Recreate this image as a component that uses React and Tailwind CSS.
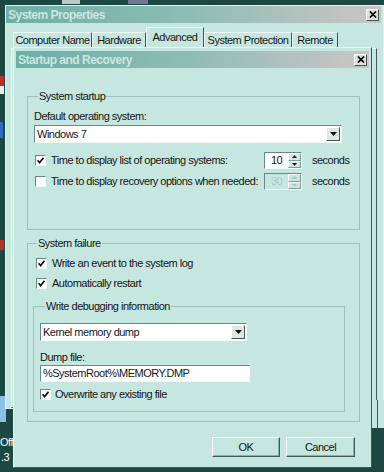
import React from 'react';
import clsx from 'clsx';

const sunken = 'border border-t-[#6b8782] border-l-[#6b8782] border-r-[#f2f9f7] border-b-[#f2f9f7]';
const raised = 'border border-t-white border-l-white border-r-[#3f5955] border-b-[#3f5955]';

function CloseBox() {
  return (
    <div className={clsx('w-[13px] h-[12px] bg-[#dcdfdc] flex items-center justify-center', raised)}>
      <svg width="8" height="7" viewBox="0 0 8 7">
        <path d="M1 0.5 L7 6.5 M7 0.5 L1 6.5" stroke="#000" strokeWidth="1.7" />
      </svg>
    </div>
  );
}

function TitleBar({ title }) {
  return (
    <div className="h-[17px] flex items-center justify-between bg-linear-to-r from-[#6cafa5] via-[#8fbdb5] to-[#cbc5c6]">
      <span className="pl-[2px] font-bold text-[12px] tracking-[-0.5px] text-[#cde6e0]">{title}</span>
      <div className="mr-[2px]">
        <CloseBox />
      </div>
    </div>
  );
}

function Check({ checked }) {
  return (
    <div className={clsx('w-[11px] h-[11px] shrink-0 bg-white flex items-center justify-center', sunken)}>
      {checked && (
        <svg width="7" height="7" viewBox="0 0 7 7">
          <path d="M0.6 3.2 L2.6 5.6 L6.5 0.8" fill="none" stroke="#111" strokeWidth="1.7" />
        </svg>
      )}
    </div>
  );
}

function DropBtn() {
  return (
    <div className={clsx('w-[14px] h-[14px] bg-[#dfe7e5] flex items-center justify-center', raised)}>
      <svg width="7" height="4" viewBox="0 0 7 4">
        <path d="M0 0 H7 L3.5 4 Z" fill="#111" />
      </svg>
    </div>
  );
}

function Spin({ value, disabled }) {
  const arrow = disabled ? '#a9c6c0' : '#222';
  const btn = clsx(
    'flex-1 flex items-center justify-center border border-t-white border-l-white border-r-[#7f9b96] border-b-[#7f9b96]',
    disabled ? 'bg-[#c6e7e0]' : 'bg-[#d5e6e2]'
  );
  return (
    <div className={clsx('w-[38px] h-[17px] flex shrink-0', sunken, disabled ? 'bg-[#c6e7e0] text-[#a9cac3]' : 'bg-white')}>
      <span className="flex-1 pl-[6px] leading-[15px]">{value}</span>
      <div className="w-[13px] flex flex-col">
        <div className={btn}>
          <svg width="5" height="3" viewBox="0 0 5 3"><path d="M0 3 H5 L2.5 0 Z" fill={arrow} /></svg>
        </div>
        <div className={btn}>
          <svg width="5" height="3" viewBox="0 0 5 3"><path d="M0 0 H5 L2.5 3 Z" fill={arrow} /></svg>
        </div>
      </div>
    </div>
  );
}

function CheckRow({ checked, label, className }) {
  return (
    <div className={clsx('flex items-center h-[13px]', className)}>
      <Check checked={checked} />
      <span className="ml-[5px] leading-[13px] whitespace-nowrap">{label}</span>
    </div>
  );
}

const tabs = [
  { label: 'Computer Name', w: 'w-[79px]' },
  { label: 'Hardware', w: 'w-[54px]' },
  { label: 'Advanced', w: 'w-[58px]', active: true },
  { label: 'System Protection', w: 'w-[88px]' },
  { label: 'Remote', w: 'w-[46px]' },
];

export default function App() {
  return (
    <div className="relative w-[384px] h-[472px] overflow-hidden bg-[#1d4842] font-['Liberation_Sans',Arial,sans-serif] text-[11px] tracking-[-0.5px] text-[#151515]">
      {/* desktop bits peeking out */}
      <div className="absolute left-[62px] top-0 w-[18px] h-[4px] bg-[#b9c9c8]" />
      <div className="absolute left-[128px] top-0 w-[20px] h-[4px] bg-[#6f7892]" />
      <div className="absolute left-0 top-[76px] w-[4px] h-[10px] bg-[#c42b2b]" />
      <div className="absolute left-0 top-[86px] w-[4px] h-[8px] bg-[#e9eef0]" />
      <div className="absolute left-0 top-[122px] w-[3px] h-[16px] bg-[#2f6cbf]" />
      <div className="absolute left-0 top-[240px] w-[4px] h-[10px] bg-[#b83030]" />
      <div className="absolute left-0 top-[396px] w-[6px] h-[26px] bg-[#8cc1e4]" />
      <span className="absolute left-0 top-[436px] text-white leading-[13px]">Office</span>
      <span className="absolute left-[1px] top-[451px] text-white leading-[13px]">.3</span>

      {/* System Properties window */}
      <div className="absolute left-[5px] top-[5px] w-[379px] h-[404px] bg-[#c6e7e0] border border-[#e4f2ef] flex flex-col">
        <div className="mr-[2px]">
          <TitleBar title="System Properties" />
        </div>
        <div className="h-[25px] flex items-end pl-[7px]">
          {tabs.map((t) => (
            <div
              key={t.label}
              className={clsx(
                t.w,
                'flex items-center justify-center border-t border-l border-r border-t-[#eef8f6] border-l-[#eef8f6] border-r-[#3f5955]',
                t.active ? 'h-[21px] pb-[2px]' : 'h-[16px]'
              )}
            >
              {t.label}
            </div>
          ))}
        </div>
        <div className="flex-1 ml-[5px] mr-[6px] border border-t-[#eef8f6] border-l-[#eef8f6] border-r-[#3f5955] border-b-[#3f5955]" />
      </div>
      {/* right edge of System Properties continues a bit lower behind the dialog */}
      <div className="absolute left-[372px] top-[400px] w-[12px] h-[28px] bg-[#c6e7e0] border-l-[5px] border-l-[#c6e7e0]">
        <div className="w-[1px] h-full bg-[#3f5955]" />
      </div>

      {/* Startup and Recovery dialog */}
      <div className="absolute left-[13px] top-[47px] w-[359px] h-[421px] z-10 bg-[#c6e7e0] border border-t-[#e8f5f2] border-l-[#e8f5f2] border-r-[#3f5955] border-b-[#3f5955] pt-[3px] px-[2px] flex flex-col">
        <TitleBar title="Startup and Recovery" />

        <fieldset className="mt-[22px] ml-[11px] mr-[9px] border border-[#9dc0b9] pl-[6px] pb-[39px]">
          <legend className="ml-[4px] px-[1px] leading-[13px]">System startup</legend>
          <div className="mt-[7px] leading-[13px]">Default operating system:</div>
          <div className={clsx('mt-[2px] w-[308px] h-[18px] bg-white flex items-center justify-between', sunken)}>
            <span className="pl-[2px]">Windows 7</span>
            <div className="mr-[1px]"><DropBtn /></div>
          </div>
          <div className="mt-[9px] h-[17px] flex items-center">
            <CheckRow checked label="Time to display list of operating systems:" className="w-[230px] pl-[1px]" />
            <Spin value="10" />
            <span className="ml-[10px]">seconds</span>
          </div>
          <div className="mt-[4px] h-[17px] flex items-center">
            <CheckRow label="Time to display recovery options when needed:" className="w-[230px] pl-[1px]" />
            <Spin value="30" disabled />
            <span className="ml-[10px]">seconds</span>
          </div>
        </fieldset>

        <fieldset className="mt-[7px] ml-[11px] mr-[9px] border border-[#9dc0b9] pl-[5px] pb-[9px]">
          <legend className="ml-[4px] px-[1px] leading-[13px]">System failure</legend>
          <CheckRow checked label="Write an event to the system log" className="mt-[7px] ml-[3px]" />
          <CheckRow checked label="Automatically restart" className="mt-[7px] ml-[3px]" />

          <fieldset className="mt-[10px] mr-[14px] border border-[#9dc0b9] pl-[6px] pb-[10px]">
            <legend className="ml-[5px] px-[1px] leading-[13px]">Write debugging information</legend>
            <div className={clsx('mt-[10px] w-[207px] h-[18px] bg-white flex items-center justify-between', sunken)}>
              <span className="pl-[2px]">Kernel memory dump</span>
              <div className="mr-[1px]"><DropBtn /></div>
            </div>
            <div className="mt-[10px] leading-[13px]">Dump file:</div>
            <div className={clsx('mt-[1px] w-[210px] h-[17px] bg-white flex items-center', sunken)}>
              <span className="pl-[2px]">%SystemRoot%\MEMORY.DMP</span>
            </div>
            <div className="mt-[6px] h-[13px] flex items-center">
              <Check checked />
              <span className="ml-[4px] leading-[13px]">Overwrite any existing file</span>
            </div>
          </fieldset>
        </fieldset>

        <div className="mt-[15px] mr-[14px] flex justify-end gap-[6px]">
          <button className={clsx('w-[68px] h-[20px] bg-[#c6e7e0] shadow-[inset_-1px_-1px_0_#8fb0aa]', raised)}>OK</button>
          <button className={clsx('w-[69px] h-[20px] bg-[#c6e7e0] shadow-[inset_-1px_-1px_0_#8fb0aa]', raised)}>Cancel</button>
        </div>
      </div>
    </div>
  );
}
